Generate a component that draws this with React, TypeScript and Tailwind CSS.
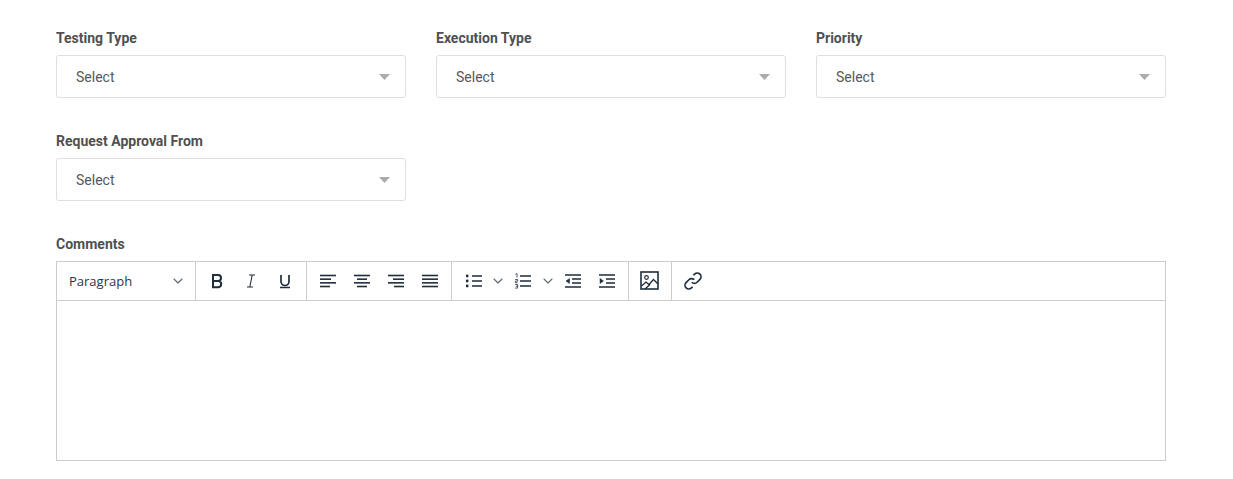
import { ChevronDown } from "lucide-react";

function SelectField({ label }: { label: string }) {
  return (
    <div className="w-[350px]">
      <label className="block h-5 mb-[7px] text-sm leading-5 font-bold text-[#4f5052]">
        {label}
      </label>
      <div className="flex items-center justify-between h-[43px] pl-[19px] pr-[15px] bg-white border border-[#dedfe1] rounded-[3px]">
        <span className="text-sm text-[#55585c]">Select</span>
        <svg width="11" height="6" viewBox="0 0 11 6">
          <path d="M0 0h11L5.5 6z" fill="#a9abad" />
        </svg>
      </div>
    </div>
  );
}

function ToolIcon({ children, className }: { children: React.ReactNode; className?: string }) {
  return (
    <svg width="18" height="18" viewBox="0 0 18 18" fill="none" stroke="#1f2d3d" className={className}>
      {children}
    </svg>
  );
}

function Lines({ rows }: { rows: [number, number][] }) {
  return (
    <ToolIcon>
      {rows.map(([x1, x2], i) => (
        <path key={i} d={`M${x1} ${3.5 + i * 3.67}H${x2}`} strokeWidth="1.6" />
      ))}
    </ToolIcon>
  );
}

export default function App() {
  return (
    <div className="min-h-[479px] bg-white pt-7 pl-14 font-['Roboto',sans-serif]">
      <div className="flex gap-[30px] mb-[33px]">
        <SelectField label="Testing Type" />
        <SelectField label="Execution Type" />
        <SelectField label="Priority" />
      </div>
      <div className="mb-[33px]">
        <SelectField label="Request Approval From" />
      </div>
      <label className="block h-5 mb-[7px] text-sm leading-5 font-bold text-[#4f5052]">Comments</label>
      <div className="w-[1110px] h-[200px] border border-[#cccccc]">
        <div className="flex h-[39px] border-b border-[#cccccc] text-[#1f2d3d]">
          <div className="flex items-center w-[139px] pl-3 pr-[9px] border-r border-[#cccccc]">
            <span className="flex-1 text-[13px] pt-px text-[#2b3644] font-['Open_Sans',sans-serif]">Paragraph</span>
            <ChevronDown size={16} color="#5f6873" strokeWidth={1.6} />
          </div>

          <div className="flex items-center w-[111px] pl-[12px] gap-4 border-r border-[#cccccc]">
            <ToolIcon>
              <path d="M5 3h5a3 3 0 0 1 0 6H5zM5 9h5.8a3.2 3.2 0 0 1 0 6.2H5z" strokeWidth="2" />
            </ToolIcon>
            <ToolIcon>
              <path d="M7 3h6M5 15h6M10.2 3 7.8 15" strokeWidth="1.1" />
            </ToolIcon>
            <ToolIcon>
              <path d="M5 3v6.5a4 4 0 0 0 8 0V3M4 15.5h10" strokeWidth="1.7" />
            </ToolIcon>
          </div>

          <div className="flex items-center w-[145px] pl-[12px] gap-4 border-r border-[#cccccc]">
            <Lines rows={[[1, 17], [1, 12], [1, 17], [1, 11]]} />
            <Lines rows={[[1, 17], [4, 14], [1, 17], [4, 14]]} />
            <Lines rows={[[1, 17], [6, 17], [1, 17], [7, 17]]} />
            <Lines rows={[[1, 17], [1, 17], [1, 17], [1, 17]]} />
          </div>

          <div className="flex items-center w-[177px] pl-[13px] border-r border-[#cccccc]">
            <ToolIcon>
              <path d="M7 4h10M7 9h10M7 14h10" strokeWidth="1.6" />
              <circle cx="2.2" cy="4" r="1.4" fill="#1f2d3d" stroke="none" />
              <circle cx="2.2" cy="9" r="1.4" fill="#1f2d3d" stroke="none" />
              <circle cx="2.2" cy="14" r="1.4" fill="#1f2d3d" stroke="none" />
            </ToolIcon>
            <ChevronDown size={16} color="#5f6873" strokeWidth={1.6} className="ml-[7px]" />
            <ToolIcon className="ml-[8px]">
              <path d="M6 4h11M6 9h11M6 14h11" strokeWidth="1.6" />
              <path d="M1.5 2.2 3 1.5v4M1.2 7.5h2.4v1.6H1.3v1.6h2.4M1.2 12.5h2.4v3.6H1.2M1.8 14.3h1.8" strokeWidth="0.8" />
            </ToolIcon>
            <ChevronDown size={16} color="#5f6873" strokeWidth={1.6} className="ml-[8px]" />
            <ToolIcon className="ml-[8px]">
              <path d="M1 3h16M8 7h9M8 11h9M1 15h16" strokeWidth="1.6" />
              <path d="M5.5 6.5 2 9l3.5 2.5z" fill="#1f2d3d" strokeWidth="0.5" />
            </ToolIcon>
            <ToolIcon className="ml-4">
              <path d="M1 3h16M8 7h9M8 11h9M1 15h16" strokeWidth="1.6" />
              <path d="M2 6.5 5.5 9 2 11.5z" fill="#1f2d3d" strokeWidth="0.5" />
            </ToolIcon>
          </div>

          <div className="flex items-center justify-center w-[43px] border-r border-[#cccccc]">
            <svg width="20" height="20" viewBox="0 0 20 20" fill="none" stroke="#1f2d3d">
              <rect x="1" y="1" width="17" height="17" strokeWidth="1.6" />
              <circle cx="6.5" cy="6.5" r="1.8" strokeWidth="1.2" />
              <path d="m1.5 15 4.5-4 3 2.5 4.5-5 4.5 4.5M5 18l5-4.5" strokeWidth="1.3" />
            </svg>
          </div>

          <div className="flex items-center pl-[11px]">
            <svg width="20" height="20" viewBox="0 0 24 24" fill="none" stroke="#1f2d3d" strokeWidth="2">
              <path d="M10.5 13.5a4.5 4.5 0 0 0 6.4 0l3.4-3.4a4.5 4.5 0 0 0-6.4-6.4l-1.4 1.4" />
              <path d="M13.5 10.5a4.5 4.5 0 0 0-6.4 0l-3.4 3.4a4.5 4.5 0 0 0 6.4 6.4l1.4-1.4" />
            </svg>
          </div>
        </div>
      </div>
    </div>
  );
}
